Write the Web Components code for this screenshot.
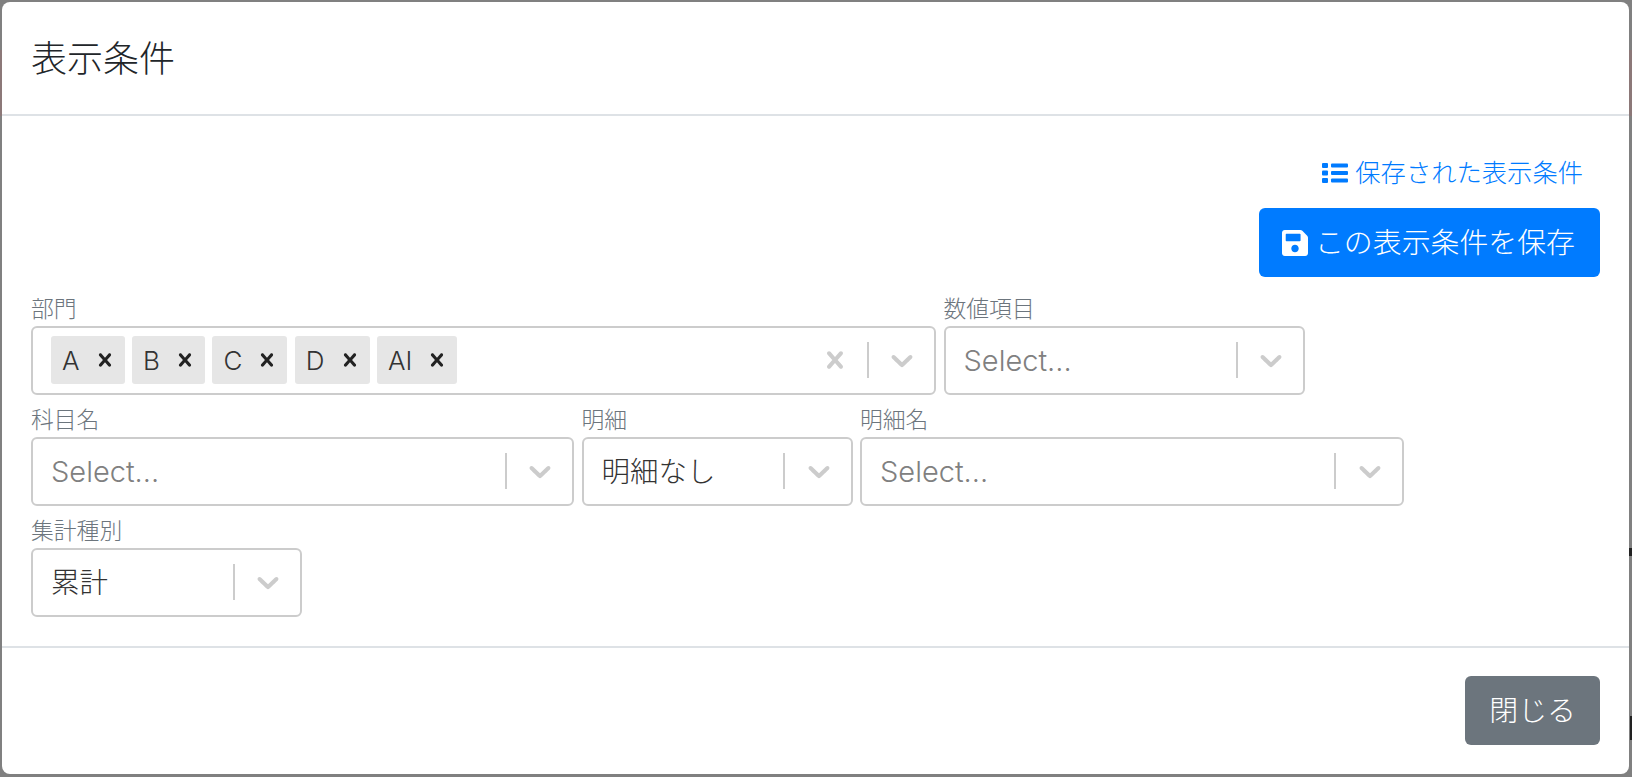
<!DOCTYPE html>
<html lang="ja">
<head>
<meta charset="utf-8">
<title>表示条件</title>
<style>
  html, body { margin: 0; height: 100%; overflow: hidden; background: #808080; }
  body { font-family: "Inter", "Noto Sans CJK JP", sans-serif; font-weight: 300; color: #212529; }
</style>
</head>
<body>

<template id="tmpl-backdrop">
  <style>
    :host { display: block; position: relative; width: 1632px; height: 777px; overflow: hidden; background: #808080; }
    .bg { position: absolute; color: #000; opacity: .85; font-size: 27px; line-height: 30px; white-space: nowrap; font-family: "Liberation Sans", sans-serif; font-weight: 400; }
    .rule { position: absolute; background: #737373; }
    .tint { position: absolute; background: #8c7878; }
    .wrap { position: relative; padding: 2px 3px 2px 2px; height: 773px; box-sizing: content-box; }
  </style>
  <!-- page behind the dialog, only a few pixels of it show round the edges -->
  <div class="tint" style="left:0;top:50px;width:2px;height:66px"></div>
  <div class="tint" style="left:1629px;top:50px;width:3px;height:66px"></div>
  <div class="rule" style="left:1629px;top:548px;width:3px;height:8px;background:#222"></div>
  <div class="rule" style="left:1630px;top:716px;width:2px;height:24px;background:#222"></div>
  <div class="bg" style="left:1017px;top:-28px">1,142,200</div>
  <div class="bg" style="left:1175px;top:-28px">142,200,000</div>
  <div class="bg" style="left:1423px;top:-28px">1,142,200</div>
  <div class="bg" style="left:125px;top:775px">19</div>
  <div class="bg" style="left:250px;top:775px">1,142,200,000</div>
  <div class="bg" style="left:541px;top:775px">10,000,000</div>
  <div class="bg" style="left:941px;top:775px">19</div>
  <div class="bg" style="left:1212px;top:775px">19</div>
  <div class="bg" style="left:1337px;top:775px">10,000,000</div>
  <div class="wrap"><slot></slot></div>
</template>

<template id="tmpl-modal">
  <style>
    :host { display: flex; flex-direction: column; height: 772px; width: 1627px; box-sizing: border-box; background: #fff; border-radius: 8px; overflow: hidden; }
    header { height: 114px; box-sizing: border-box; flex: none; display: flex; align-items: center; padding: 0 29px 5px; border-bottom: 2px solid #dee2e6; font-size: 36px; color: #212529; }
    main { flex: 1; padding: 37px 29px 0 29px; min-height: 0; }
    footer { flex: none; height: 128px; box-sizing: border-box; display: flex; justify-content: flex-end; padding: 28px 29px 0; border-top: 2px solid #dee2e6; }
  </style>
  <header><slot name="title"></slot></header>
  <main><slot></slot></main>
  <footer><slot name="footer"></slot></footer>
</template>

<template id="tmpl-link">
  <style>
    :host { display: flex; justify-content: flex-end; align-items: center; gap: 7px; height: 36px; padding-right: 17px; color: #007bff; font-size: 25.3px; }
    svg { width: 26px; height: 26px; fill: currentColor; flex: none; margin-top: 3px; }
  </style>
  <svg viewBox="0 0 26 26"><rect x="0" y="3" width="6" height="5" rx="1"/><rect x="0" y="10.5" width="6" height="5" rx="1"/><rect x="0" y="18" width="6" height="5" rx="1"/><rect x="9" y="3.5" width="17" height="4" rx="1"/><rect x="9" y="11" width="17" height="4" rx="1"/><rect x="9" y="18.5" width="17" height="4" rx="1"/></svg>
  <span><slot></slot></span>
</template>

<template id="tmpl-button">
  <style>
    :host { display: inline-flex; align-items: center; gap: 7px; height: 69px; box-sizing: border-box; padding: 0 25px 0 23px; border-radius: 6px; color: #fff; background: var(--btn, #007bff); font-size: 28.9px; }
    :host([plain]) { padding: 0 24px; }
    span { padding-bottom: 5px; }
    svg { width: 26px; height: 30px; fill: currentColor; flex: none; }
    :host([plain]) svg { display: none; }
  </style>
  <svg viewBox="0 0 448 512"><path d="M433.941 129.941l-83.882-83.882A48 48 0 0 0 316.118 32H48C21.49 32 0 53.49 0 80v352c0 26.51 21.49 48 48 48h352c26.51 0 48-21.49 48-48V163.882a48 48 0 0 0-14.059-33.941zM224 416c-35.346 0-64-28.654-64-64 0-35.346 28.654-64 64-64s64 28.654 64 64c0 35.346-28.654 64-64 64zm96-304.52V212c0 6.627-5.373 12-12 12H76c-6.627 0-12-5.373-12-12V108c0-6.627 5.373-12 12-12h228.52c3.183 0 6.235 1.264 8.485 3.515l3.48 3.48A11.996 11.996 0 0 1 320 111.48z"/></svg>
  <span><slot></slot></span>
</template>

<template id="tmpl-chip">
  <style>
    :host { display: inline-flex; align-items: center; height: 48px; background: #e6e6e6; border-radius: 3px; color: #333; font-size: 26px; }
    span { padding-left: 11px; padding-right: 12px; }
    svg { width: 26px; height: 26px; fill: #222; margin-right: 7px; flex: none; }
  </style>
  <span><slot></slot></span>
  <svg viewBox="0 0 20 20"><path d="M14.348 14.849c-0.469 0.469-1.229 0.469-1.697 0l-2.651-3.030-2.651 3.029c-0.469 0.469-1.229 0.469-1.697 0-0.469-0.469-0.469-1.229 0-1.697l2.758-3.15-2.759-3.152c-0.469-0.469-0.469-1.228 0-1.697s1.228-0.469 1.697 0l2.652 3.031 2.651-3.031c0.469-0.469 1.228-0.469 1.697 0s0.469 1.229 0 1.697l-2.758 3.152 2.758 3.15c0.469 0.469 0.469 1.229 0 1.698z"/></svg>
</template>

<template id="tmpl-select">
  <style>
    :host { display: block; width: var(--w, 300px); flex: none; }
    label { display: block; height: 33px; line-height: 33px; margin-top: 8px; margin-bottom: 1.5px; color: #6c757d; font-size: 22.8px; }
    .control { display: flex; align-items: center; height: 68.5px; box-sizing: border-box; border: 2px solid #ccc; border-radius: 6px; background: #fff; }
    .value { flex: 1; min-width: 0; display: flex; align-items: center; gap: 7.5px; padding-left: 18px; font-size: 28.5px; color: #333; }
    .placeholder { color: #808080; font-size: 29px; }
    .icons { display: flex; align-items: center; flex: none; }
    .clear { display: none; width: 34px; height: 34px; margin-right: 15px; fill: #ccc; }
    :host([clearable]) .clear { display: block; }
    .sep { width: 2px; height: 36px; background: #ccc; }
    .arrow { width: 36px; height: 36px; margin: 0 14px 0 15.5px; fill: #ccc; }
  </style>
  <label></label>
  <div class="control">
    <div class="value"><slot><span class="placeholder">Select...</span></slot></div>
    <div class="icons">
      <svg class="clear" viewBox="0 0 20 20"><path d="M14.348 14.849c-0.469 0.469-1.229 0.469-1.697 0l-2.651-3.030-2.651 3.029c-0.469 0.469-1.229 0.469-1.697 0-0.469-0.469-0.469-1.229 0-1.697l2.758-3.15-2.759-3.152c-0.469-0.469-0.469-1.228 0-1.697s1.228-0.469 1.697 0l2.652 3.031 2.651-3.031c0.469-0.469 1.228-0.469 1.697 0s0.469 1.229 0 1.697l-2.758 3.152 2.758 3.15c0.469 0.469 0.469 1.229 0 1.698z"/></svg>
      <div class="sep"></div>
      <svg class="arrow" viewBox="0 0 20 20"><path d="M4.516 7.548c0.436-0.446 1.043-0.481 1.576 0l3.908 3.747 3.908-3.747c0.533-0.481 1.141-0.446 1.574 0 0.436 0.445 0.408 1.197 0 1.615-0.406 0.418-4.695 4.502-4.695 4.502-0.217 0.223-0.502 0.335-0.787 0.335s-0.57-0.112-0.789-0.335c0 0-4.287-4.084-4.695-4.502s-0.436-1.17 0-1.615z"/></svg>
    </div>
  </div>
</template>

<template id="tmpl-row">
  <style>
    :host { display: flex; gap: 7.5px; }
  </style>
  <slot></slot>
</template>

<template id="tmpl-actions">
  <style>
    :host { display: flex; flex-direction: column; align-items: stretch; margin-bottom: 6.5px; }
    .btn { display: flex; justify-content: flex-end; margin-top: 19px; }
  </style>
  <slot name="link"></slot>
  <div class="btn"><slot name="button"></slot></div>
</template>

<x-backdrop>
  <x-modal>
    <span slot="title">表示条件</span>
    <x-actions>
      <x-link slot="link">保存された表示条件</x-link>
      <x-button slot="button">この表示条件を保存</x-button>
    </x-actions>
    <x-row>
      <x-select label="部門" clearable style="--w:905px">
        <x-chip>A</x-chip><x-chip>B</x-chip><x-chip>C</x-chip><x-chip>D</x-chip><x-chip>AI</x-chip>
      </x-select>
      <x-select label="数値項目" style="--w:361.5px"></x-select>
    </x-row>
    <x-row>
      <x-select label="科目名" style="--w:543px"></x-select>
      <x-select label="明細" style="--w:271px"><span style="padding-bottom:4px">明細なし</span></x-select>
      <x-select label="明細名" style="--w:543.5px"></x-select>
    </x-row>
    <x-row>
      <x-select label="集計種別" style="--w:271px"><span style="padding-bottom:4px">累計</span></x-select>
    </x-row>
    <x-button slot="footer" plain style="--btn:#6c757d">閉じる</x-button>
  </x-modal>
</x-backdrop>

<script>
  (() => {
    const simple = (name, tmplId, init) => {
      const tmpl = document.getElementById(tmplId);
      customElements.define(name, class extends HTMLElement {
        constructor() {
          super();
          const root = this.attachShadow({mode: 'open'});
          root.appendChild(tmpl.content.cloneNode(true));
          if (init) init(this, root);
        }
      });
    };

    simple('x-backdrop', 'tmpl-backdrop');
    simple('x-modal', 'tmpl-modal');
    simple('x-actions', 'tmpl-actions');
    simple('x-link', 'tmpl-link');
    simple('x-row', 'tmpl-row');
    simple('x-chip', 'tmpl-chip');
    simple('x-button', 'tmpl-button');

    simple('x-select', 'tmpl-select', (el, root) => {
      root.querySelector('label').textContent = el.getAttribute('label');
    });
  })();
</script>
</body>
</html>
